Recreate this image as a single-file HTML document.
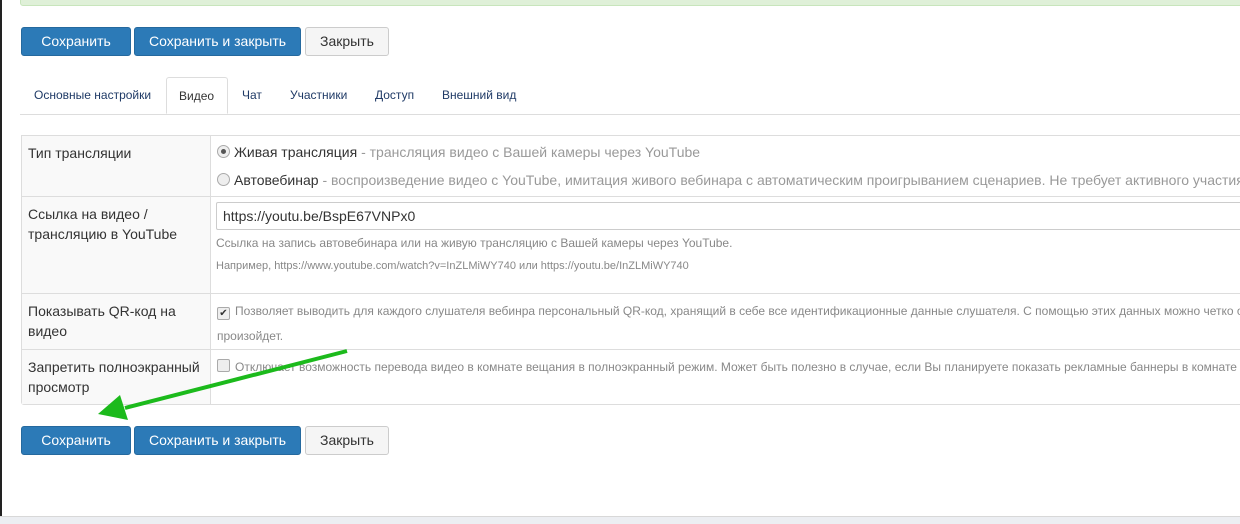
<!DOCTYPE html>
<html><head><meta charset="utf-8"><style>
body{margin:0;width:1240px;height:523px;overflow:hidden;background:#fff;font-family:"Liberation Sans",Arial,sans-serif;position:relative;color:#333}
.lb{position:absolute;left:0;top:0;width:2px;height:523px;background:#222}
.alert{position:absolute;left:20px;top:-5px;width:1240px;height:9px;background:#dff0d8;border:1px solid #c8e5bc;border-radius:3px}
.btn{position:absolute;height:29px;box-sizing:border-box;border-radius:3px;font-size:14px;line-height:27px;text-align:center;border:1px solid}
.p{background:#2c7ab7;border-color:#25699e;color:#fff}
.d{background:#f5f5f5;border-color:#ccc;color:#333}
.tabs{position:absolute;left:20px;top:114px;width:1220px;border-bottom:1px solid #ddd}
.tab{position:absolute;top:-37px;height:37px;line-height:37px;font-size:12px;color:#1f3a66}
.tab.a{border:1px solid #ddd;border-bottom:1px solid #fff;border-radius:3px 3px 0 0;background:#fff;color:#333;padding:0 12px;box-sizing:border-box}
.row{position:absolute;left:21px;width:1230px;border:1px solid #ddd;box-sizing:border-box;font-size:14px}
.row .l{position:absolute;left:0;top:0;bottom:0;width:189px;background:#f9f9f9;border-right:1px solid #ddd;padding:7px 6px;box-sizing:border-box;line-height:20px}
.row .c{position:absolute;left:189px;top:0;right:0;bottom:0;padding:6px 6px;white-space:nowrap;overflow:hidden}
.g{color:#999}
.s{font-size:12px;color:#888}
.rad{display:inline-block;width:11px;height:11px;border:1px solid #aaa;border-radius:50%;background:#eee;vertical-align:-1px;margin-right:4px;position:relative}
.rad.on:after{content:"";position:absolute;left:3px;top:3px;width:5px;height:5px;border-radius:50%;background:#555}
.cb{display:inline-block;width:11px;height:11px;border:1px solid #aaa;border-radius:2px;background:#eee;vertical-align:-1px;margin-right:5px;font-size:10px;line-height:11px;text-align:center;color:#333}
.inp{border:1px solid #ccc;height:28px;box-sizing:border-box;padding:0 6px;line-height:26px;width:1100px;font-size:14px;border-radius:2px;color:#333}
.bot{position:absolute;left:0;top:516px;width:1240px;height:7px;background:#eceef2;border-top:1px solid #d8d8d8}
</style></head><body>
<div class="lb"></div>
<div class="alert"></div>
<div class="btn p" style="left:21px;top:27px;width:110px">Сохранить</div>
<div class="btn p" style="left:134px;top:27px;width:167px">Сохранить и закрыть</div>
<div class="btn d" style="left:305px;top:27px;width:84px">Закрыть</div>
<div class="tabs">
<span class="tab" style="left:14px">Основные настройки</span>
<span class="tab a" style="left:146px;width:62px">Видео</span>
<span class="tab" style="left:222px">Чат</span>
<span class="tab" style="left:270px">Участники</span>
<span class="tab" style="left:355px">Доступ</span>
<span class="tab" style="left:422px">Внешний вид</span>
</div>
<div class="row" style="top:135px;height:62px"><div class="l">Тип трансляции</div><div class="c" style="line-height:28px;padding-top:2px"><span class="rad on"></span>Живая трансляция <span class="g">- трансляция видео с Вашей камеры через YouTube</span><br><span class="rad"></span>Автовебинар <span class="g">- воспроизведение видео с YouTube, имитация живого вебинара с автоматическим проигрыванием сценариев. Не требует активного участия</span></div></div>
<div class="row" style="top:196px;height:98px"><div class="l">Ссылка на видео / трансляцию в YouTube</div><div class="c" style="padding:5px 5px"><div class="inp">https://youtu.be/BspE67VNPx0</div><div class="s" style="margin-top:6px">Ссылка на запись автовебинара или на живую трансляцию с Вашей камеры через YouTube.</div><div class="s" style="margin-top:10px;font-size:11px">Например, https://www.youtube.com/watch?v=InZLMiWY740 или https://youtu.be/InZLMiWY740</div></div></div>
<div class="row" style="top:293px;height:57px"><div class="l">Показывать QR-код на видео</div><div class="c"><div class="s" style="line-height:25px;margin-top:-1px"><span class="cb">✔</span>Позволяет выводить для каждого слушателя вебинра персональный QR-код, хранящий в себе все идентификационные данные слушателя. С помощью этих данных можно четко о<br>произойдет.</div></div></div>
<div class="row" style="top:349px;height:56px;border-radius:0 0 0 3px"><div class="l">Запретить полноэкранный просмотр</div><div class="c"><div class="s" style="line-height:25px;margin-top:-1px"><span class="cb"></span>Отключает возможность перевода видео в комнате вещания в полноэкранный режим. Может быть полезно в случае, если Вы планируете показать рекламные баннеры в комнате в</div></div></div>
<svg style="position:absolute;left:0;top:0" width="1240" height="523"><line x1="347" y1="351" x2="125" y2="408" stroke="#1cba1c" stroke-width="4"/><polygon points="98,414 120,395 128,420" fill="#1cba1c"/></svg>
<div class="btn p" style="left:21px;top:426px;width:110px">Сохранить</div>
<div class="btn p" style="left:134px;top:426px;width:167px">Сохранить и закрыть</div>
<div class="btn d" style="left:305px;top:426px;width:84px">Закрыть</div>
<div class="bot"></div>
</body></html>
